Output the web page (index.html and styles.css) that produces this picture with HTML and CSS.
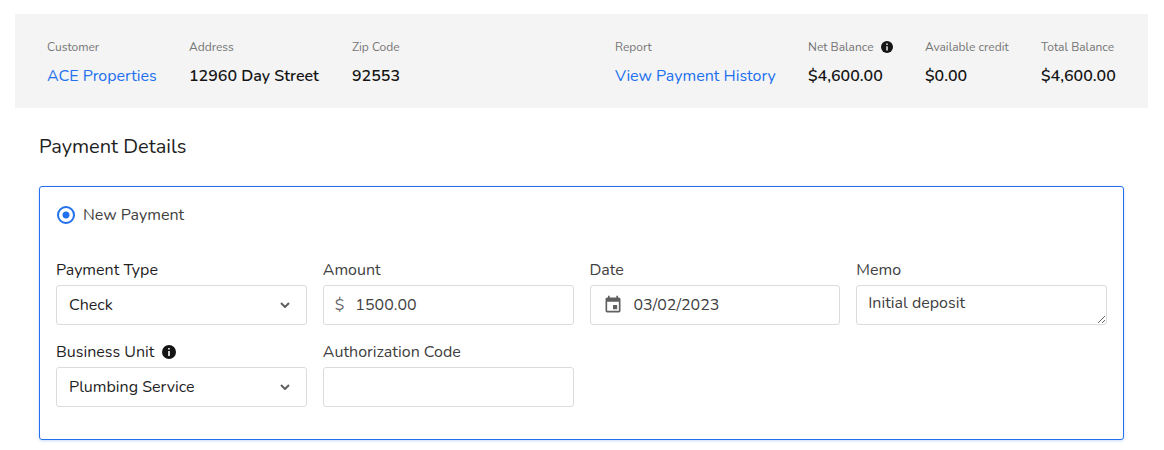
FILE: index.html
```html
<!DOCTYPE html>
<html lang="en">
<head>
  <meta charset="UTF-8" />
  <meta name="viewport" content="width=device-width, initial-scale=1.0">
  <title>Payment Details</title>
  <link rel="stylesheet" href="styles.css">
</head>
<body>
  <!-- Customer summary -->
  <header class="summary">
    <div class="summary-item">
      <span class="summary-label">Customer</span>
      <a href="#">ACE Properties</a>
    </div>
    <div class="summary-item">
      <span class="summary-label">Address</span>
      <strong>12960 Day Street</strong>
    </div>
    <div class="summary-item">
      <span class="summary-label">Zip Code</span>
      <strong>92553</strong>
    </div>
    <div class="summary-item">
      <span class="summary-label">Report</span>
      <a href="#">View Payment History</a>
    </div>
    <div class="summary-item">
      <span class="summary-label">Net Balance
        <svg class="info small" viewBox="0 0 14 14" aria-hidden="true"><circle cx="7" cy="7" r="7"/><path d="M6.2 3h1.6v1.6H6.2zM6.2 6h1.6v5H6.2z"/></svg>
      </span>
      <strong>$4,600.00</strong>
    </div>
    <div class="summary-item">
      <span class="summary-label">Available credit</span>
      <strong>$0.00</strong>
    </div>
    <div class="summary-item">
      <span class="summary-label">Total Balance</span>
      <strong>$4,600.00</strong>
    </div>
  </header>

  <!-- Payment form -->
  <main>
    <h1>Payment Details</h1>
    <form class="card">
      <label class="radio">
        <input type="radio" name="payment" checked>
        New Payment
      </label>

      <div class="fields">
        <div class="field">
          <label class="dark" for="type">Payment Type</label>
          <div class="control">
            <select id="type">
              <option>Check</option>
            </select>
            <svg class="chevron" viewBox="0 0 10 6" aria-hidden="true"><path d="M1 1l4 4 4-4"/></svg>
          </div>
        </div>

        <div class="field">
          <label for="amount">Amount</label>
          <div class="control">
            <span class="dollar">$</span>
            <input type="text" id="amount" value="1500.00">
          </div>
        </div>

        <div class="field">
          <label for="date">Date</label>
          <div class="control">
            <svg class="calendar" viewBox="0 0 24 24" aria-hidden="true"><path d="M17 12h-5v5h5v-5zM16 1v2H8V1H6v2H5c-1.11 0-1.99.9-1.99 2L3 19a2 2 0 0 0 2 2h14c1.1 0 2-.9 2-2V5c0-1.1-.9-2-2-2h-1V1h-2zm3 18H5V8h14v11z"/></svg>
            <input type="text" id="date" value="03/02/2023">
          </div>
        </div>

        <div class="field">
          <label for="memo">Memo</label>
          <textarea id="memo" rows="1">Initial deposit</textarea>
        </div>

        <div class="field">
          <label class="dark" for="unit">Business Unit
            <svg class="info" viewBox="0 0 14 14" aria-hidden="true"><circle cx="7" cy="7" r="7"/><path d="M6.2 3h1.6v1.6H6.2zM6.2 6h1.6v5H6.2z"/></svg>
          </label>
          <div class="control">
            <select id="unit">
              <option>Plumbing Service</option>
            </select>
            <svg class="chevron" viewBox="0 0 10 6" aria-hidden="true"><path d="M1 1l4 4 4-4"/></svg>
          </div>
        </div>

        <div class="field">
          <label for="code">Authorization Code</label>
          <div class="control">
            <input type="text" id="code">
          </div>
        </div>
      </div>
    </form>
  </main>
</body>
</html>
```
FILE: styles.css
```css
* {
  box-sizing: border-box;
}
body {
  margin: 14px 16px 0 15px;
  font-family: Nunito, Lato, sans-serif;
  font-size: 16px;
  line-height: 24px;
  color: #404040;
  background: #fff;
}
.summary {
  display: grid;
  grid-template-columns: 110px 131px 1fr 161px 85px 84px 75px;
  gap: 32px;
  padding: 21px 32px 20px;
  background: #f4f4f4;
}
.summary-item {
  display: flex;
  flex-direction: column;
  gap: 5px;
  white-space: nowrap;
}
.summary-label {
  display: flex;
  align-items: center;
  gap: 7px;
  font-size: 12px;
  color: #757575;
}
.summary a {
  color: #2270ee;
  text-decoration: none;
}
.summary strong {
  font-weight: 600;
  color: #141414;
}
main {
  padding: 24px;
}
h1 {
  margin: 0 0 24px;
  font-size: 20px;
  line-height: 30px;
  font-weight: 400;
  color: #1f1f1f;
}
.card {
  padding: 16px 16px 32px;
  border: 1px solid #2270ee;
  border-radius: 3px;
  box-shadow: 0 1px 3px rgba(34, 112, 238, 0.25);
}
.radio {
  display: flex;
  align-items: center;
  gap: 8px;
}
.radio input {
  appearance: none;
  width: 18px;
  height: 18px;
  margin: 0 0 0 1px;
  border: 2px solid #2270ee;
  border-radius: 50%;
  background: radial-gradient(circle, #2270ee 3px, transparent 4px);
}
.fields {
  display: grid;
  grid-template-columns: repeat(4, minmax(0, 1fr));
  gap: 15px 16px;
  margin-top: 31px;
}
.field label {
  display: flex;
  align-items: center;
  gap: 8px;
  margin-bottom: 3px;
}
.field .dark {
  color: #1f1f1f;
}
.control, textarea {
  width: 100%;
  height: 40px;
  border: 1px solid #dcdcdc;
  border-radius: 3px;
  background: #fff;
}
.control {
  display: flex;
  align-items: center;
  position: relative;
}
.control input, .control select {
  flex: 1;
  min-width: 0;
  height: 38px;
  padding: 0 11px;
  border: none;
  outline: none;
  background: transparent;
  font: inherit;
  color: #404040;
}
.control select {
  appearance: none;
  padding: 0 12px;
  color: #1f1f1f;
}
textarea {
  display: block;
  padding: 5px 11px;
  font: inherit;
  color: #404040;
  overflow: hidden;
  resize: vertical;
}
.chevron {
  position: absolute;
  right: 16px;
  width: 10px;
  height: 6px;
  fill: none;
  stroke: #606060;
  stroke-width: 2;
  pointer-events: none;
}
.dollar {
  margin-left: 11px;
  color: #666;
}
.calendar {
  width: 20px;
  height: 20px;
  margin-left: 12px;
  fill: #606060;
}
.info {
  width: 14px;
  height: 14px;
  fill: #141414;
}
.info path {
  fill: #fff;
}
.info.small {
  width: 12px;
  height: 12px;
}
```
